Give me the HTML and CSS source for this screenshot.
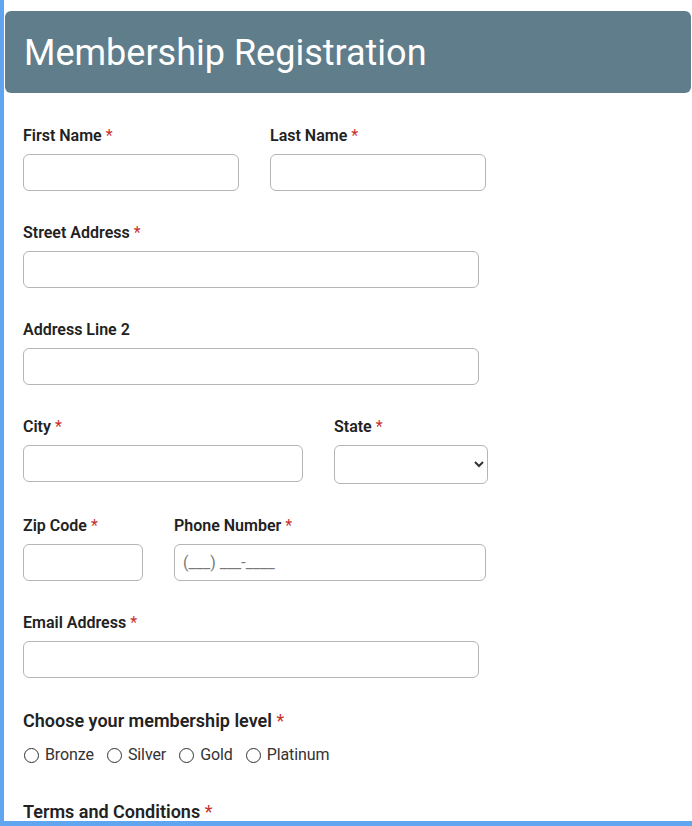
FILE: index.html
```html
<!DOCTYPE html>
<html lang="en">
<head>
<meta charset="utf-8">
<title>Membership Registration</title>
<link rel="stylesheet" href="styles.css">
</head>
<body>
<div class="page">
  <header class="banner">
    <h1 class="banner-title">Membership Registration</h1>
  </header>
  <form class="form">
    <div class="row">
      <div class="field">
        <label class="label">First Name <span class="req">*</span></label>
        <input class="input w-216" type="text">
      </div>
      <div class="field">
        <label class="label">Last Name <span class="req">*</span></label>
        <input class="input w-216" type="text">
      </div>
    </div>
    <div class="row">
      <div class="field">
        <label class="label">Street Address <span class="req">*</span></label>
        <input class="input w-456" type="text">
      </div>
    </div>
    <div class="row">
      <div class="field">
        <label class="label">Address Line 2</label>
        <input class="input w-456" type="text">
      </div>
    </div>
    <div class="row">
      <div class="field">
        <label class="label">City <span class="req">*</span></label>
        <input class="input w-280" type="text">
      </div>
      <div class="field">
        <label class="label">State <span class="req">*</span></label>
        <select class="select w-154"><option></option></select>
      </div>
    </div>
    <div class="row">
      <div class="field">
        <label class="label">Zip Code <span class="req">*</span></label>
        <input class="input w-120" type="text">
      </div>
      <div class="field">
        <label class="label">Phone Number <span class="req">*</span></label>
        <input class="input w-312" type="text" placeholder="(___) ___-____">
      </div>
    </div>
    <div class="row">
      <div class="field">
        <label class="label">Email Address <span class="req">*</span></label>
        <input class="input w-456" type="email">
      </div>
    </div>
    <div class="group">
      <div class="group-label">Choose your membership level <span class="req">*</span></div>
      <div class="radios">
        <label class="radio"><input type="radio" name="level"> Bronze</label>
        <label class="radio"><input type="radio" name="level"> Silver</label>
        <label class="radio"><input type="radio" name="level"> Gold</label>
        <label class="radio"><input type="radio" name="level"> Platinum</label>
      </div>
    </div>
    <div class="group">
      <div class="group-label">Terms and Conditions <span class="req">*</span></div>
    </div>
  </form>
</div>
</body>
</html>
```
FILE: styles.css
```css
* { box-sizing: border-box; }
html, body { margin: 0; padding: 0; background: #fff; }
body { font-family: Roboto, "Liberation Sans", Arial, sans-serif; color: #222; }

.page {
  height: 100vh;
  overflow: hidden;
  border-left: 4px solid #5fa5f0;
  border-bottom: 5px solid #5fa5f0;
  padding-top: 11px;
}

.banner {
  margin: 0 1px 0 1px;
  height: 82px;
  background: #607d8b;
  border-radius: 6px;
  display: flex;
  align-items: center;
  padding-left: 19px;
}
.banner-title {
  margin: 0;
  font-size: 36px;
  font-weight: 400;
  color: #fff;
  line-height: 1;
  padding-top: 1px;
}

.form {
  padding: 33px 0 0 19px;
}

.row {
  display: flex;
  gap: 31px;
  margin-bottom: 32px;
}
.field {
  display: flex;
  flex-direction: column;
}
.label {
  font-size: 16px;
  line-height: 19px;
  font-weight: 600;
  color: #222;
  margin-bottom: 9px;
}
.req { color: #c9302c; font-weight: 400; }

.input, .select {
  height: 37px;
  border: 1px solid #b5b5b5;
  border-radius: 6px;
  background: #fff;
  font-family: inherit;
  font-size: 16px;
  padding: 0 8px;
  color: #333;
}
.select { height: 39px; }
.input::placeholder { color: #7a7a7a; }

.w-216 { width: 216px; }
.w-456 { width: 456px; }
.w-280 { width: 280px; }
.w-154 { width: 154px; }
.w-120 { width: 120px; }
.w-312 { width: 312px; }

.group { margin-bottom: 36px; }
.group-label {
  font-size: 18px;
  line-height: 21px;
  font-weight: 600;
  color: #222;
  margin-bottom: 14px;
}
.radios {
  display: flex;
  gap: 12px;
  font-size: 16px;
  line-height: 20px;
  color: #333;
}
.radio {
  display: flex;
  align-items: center;
  gap: 6px;
  letter-spacing: -0.1px;
}
.radio input {
  appearance: none;
  -webkit-appearance: none;
  flex: none;
  margin: 0 0 0 1px;
  width: 15px;
  height: 15px;
  border: 1.2px solid #333;
  border-radius: 50%;
  background: #fff;
}
```
